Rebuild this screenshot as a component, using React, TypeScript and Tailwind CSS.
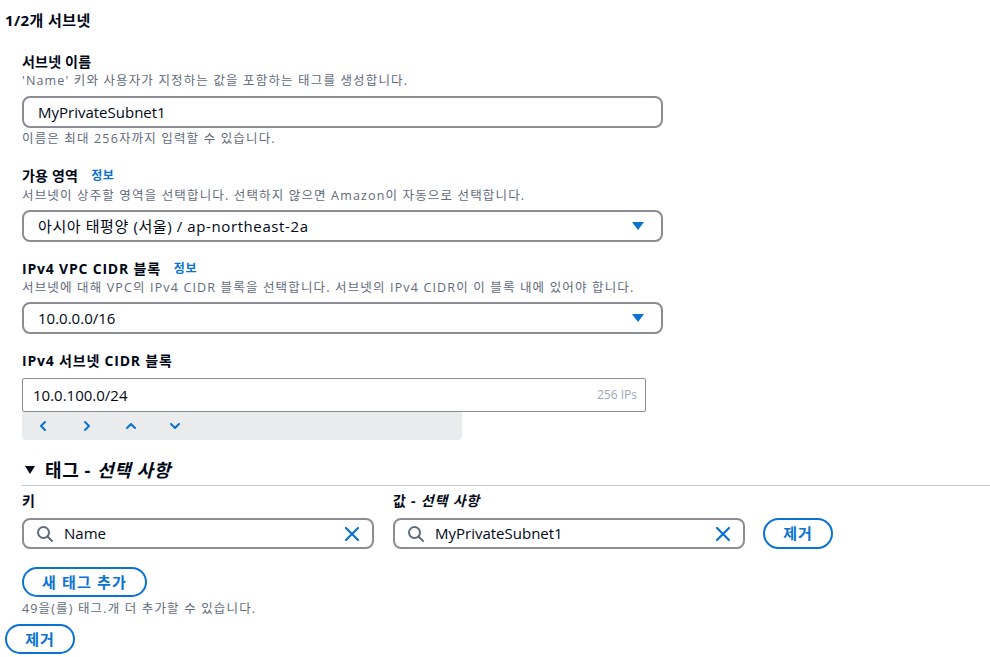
import React from "react";

const font = { fontFamily: '"Open Sans", "Noto Sans CJK KR", sans-serif' };

function Caret() {
  return (
    <svg width="14" height="10" viewBox="0 0 14 10" className="shrink-0">
      <path d="M1 1 L13 1 L7 9 Z" fill="#0972d3" />
    </svg>
  );
}

function SearchIcon() {
  return (
    <svg width="18" height="18" viewBox="0 0 18 18" className="shrink-0">
      <circle cx="7.5" cy="7.5" r="5.5" fill="none" stroke="#5f6b7a" strokeWidth="2" />
      <path d="M11.5 11.5 L16 16" stroke="#5f6b7a" strokeWidth="2" strokeLinecap="round" />
    </svg>
  );
}

function XIcon() {
  return (
    <svg width="16" height="16" viewBox="0 0 16 16" className="shrink-0">
      <path d="M2 2 L14 14 M14 2 L2 14" stroke="#0972d3" strokeWidth="2.2" strokeLinecap="round" />
    </svg>
  );
}

function Chevron({ dir }: { dir: "l" | "r" | "u" | "d" }) {
  const d =
    dir === "l"
      ? "M8 2 L4 6 L8 10"
      : dir === "r"
      ? "M4 2 L8 6 L4 10"
      : dir === "u"
      ? "M2 8 L6 4 L10 8"
      : "M2 4 L6 8 L10 4";
  return (
    <svg width="12" height="12" viewBox="0 0 12 12">
      <path d={d} fill="none" stroke="#0972d3" strokeWidth="2" strokeLinecap="round" strokeLinejoin="round" />
    </svg>
  );
}

function Label({ text, info, wide }: { text: string; info?: boolean; wide?: boolean }) {
  return (
    <div
      className={
        wide
          ? "flex items-center text-[14px] font-bold leading-[22px] tracking-[0.8px] text-[#000716]"
          : "flex items-center text-[14px] font-bold leading-[22px] tracking-[0.2px] text-[#000716]"
      }
    >
      <span>{text}</span>
      {info && <span className="ml-[13px] text-[12px] font-bold tracking-[0.5px] text-[#0972d3]">정보</span>}
    </div>
  );
}

function Desc({ text }: { text: string }) {
  return <div className="text-[12.5px] leading-[16px] tracking-[1.15px] text-[#5f6b7a]">{text}</div>;
}

function Select({ value, wide }: { value: string; wide?: boolean }) {
  return (
    <div className="mt-[6px] flex h-[32px] w-[641px] items-center justify-between rounded-[8px] border-2 border-[#8c8c94] pl-[14px] pr-[16px] text-[15px] text-[#000716]">
      <span className={wide ? "tracking-[0.6px]" : ""}>{value}</span>
      <Caret />
    </div>
  );
}

function TagInput({ value }: { value: string }) {
  return (
    <div className="flex h-[31px] w-[352px] items-center rounded-[8px] border-2 border-[#8c8c94] pl-[12px] pr-[12px] text-[15px] text-[#000716]">
      <SearchIcon />
      <span className="ml-[10px] flex-1">{value}</span>
      <XIcon />
    </div>
  );
}

export default function App() {
  return (
    <div className="h-[657px] w-[990px] overflow-hidden bg-white" style={font}>
      <div className="pl-[5px] pt-[10px] text-[15px] font-bold leading-[20px] tracking-[0.4px] text-[#000716]">1/2개 서브넷</div>

      <div className="pl-[22px]">
        <div className="mt-[21px]">
          <Label text="서브넷 이름" />
          <Desc text="'Name' 키와 사용자가 지정하는 값을 포함하는 태그를 생성합니다." />
          <div className="mt-[7px] flex h-[32px] w-[641px] items-center rounded-[8px] border-2 border-[#8c8c94] pl-[14px] text-[15px] text-[#000716]">
            MyPrivateSubnet1
          </div>
          <div className="mt-[3px] text-[12.5px] leading-[16px] tracking-[1.15px] text-[#5f6b7a]">이름은 최대 256자까지 입력할 수 있습니다.</div>
        </div>

        <div className="mt-[18px]">
          <Label text="가용 영역" info />
          <div className="mt-[1px]">
            <Desc text="서브넷이 상주할 영역을 선택합니다. 선택하지 않으면 Amazon이 자동으로 선택합니다." />
          </div>
          <Select value="아시아 태평양 (서울) / ap-northeast-2a" wide />
        </div>

        <div className="mt-[16px]">
          <Label text="IPv4 VPC CIDR 블록" info wide />
          <Desc text="서브넷에 대해 VPC의 IPv4 CIDR 블록을 선택합니다. 서브넷의 IPv4 CIDR이 이 블록 내에 있어야 합니다." />
          <Select value="10.0.0.0/16" />
        </div>

        <div className="mt-[16px]">
          <Label text="IPv4 서브넷 CIDR 블록" wide />
          <div className="mt-[6px] flex h-[34px] w-[624px] items-center justify-between rounded-[2px] border border-[#8c8c94] pl-[10px] pr-[8px]">
            <span className="text-[15px] text-[#000716]">10.0.100.0/24</span>
            <span className="text-[12px] text-[#9ba7b6]">256 IPs</span>
          </div>
          <div className="flex h-[28px] w-[440px] items-center gap-[32px] rounded-b-[4px] bg-[#e9ebed] pl-[15px]">
            <Chevron dir="l" />
            <Chevron dir="r" />
            <Chevron dir="u" />
            <Chevron dir="d" />
          </div>
        </div>

        <div className="mt-[19px]">
          <div className="flex items-center text-[18px] font-bold leading-[22px] tracking-[0.6px] text-[#000716]">
            <svg width="12" height="10" viewBox="0 0 12 10" className="ml-[2px] mr-[9px]">
              <path d="M1 1 L11 1 L6 9 Z" fill="#000716" />
            </svg>
            <span>태그 - </span>
            <span className="ml-[6px] italic">선택 사항</span>
          </div>
          <div className="mt-[4px] h-px bg-[#c6c6cd]" />
          <div className="mt-[4px] flex text-[14px] font-bold leading-[22px] tracking-[0.8px] text-[#000716]">
            <div className="w-[371px]">키</div>
            <div>
              값 - <span className="italic">선택 사항</span>
            </div>
          </div>
          <div className="mt-[6px] flex items-center">
            <TagInput value="Name" />
            <div className="ml-[19px]">
              <TagInput value="MyPrivateSubnet1" />
            </div>
            <div className="ml-[18px] flex h-[31px] w-[70px] items-center justify-center rounded-full border-2 border-[#0972d3] text-[15px] font-bold tracking-[1px] text-[#0972d3]">
              제거
            </div>
          </div>
          <div className="mt-[18px] flex h-[30px] w-[125px] items-center justify-center rounded-full border-2 border-[#0972d3] text-[15px] font-bold tracking-[1.2px] text-[#0972d3]">
            새 태그 추가
          </div>
          <div className="mt-[4px] text-[12.5px] leading-[16px] tracking-[1.15px] text-[#5f6b7a]">49을(를) 태그.개 더 추가할 수 있습니다.</div>
        </div>
      </div>
      <div className="ml-[5px] mt-[7px] flex h-[30px] w-[70px] items-center justify-center rounded-full border-2 border-[#0972d3] text-[15px] font-bold tracking-[1px] text-[#0972d3]">
        제거
      </div>
    </div>
  );
}
